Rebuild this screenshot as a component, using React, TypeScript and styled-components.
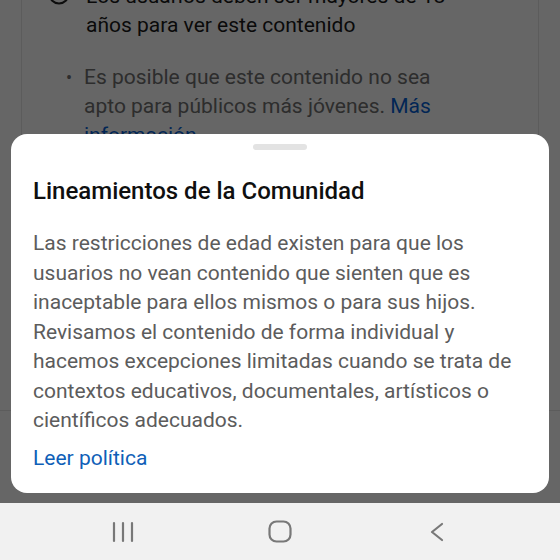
import React from "react";
import styled, { createGlobalStyle } from "styled-components";

const Global = createGlobalStyle`
  html, body { margin: 0; padding: 0; }
  body { font-family: Roboto, "Noto Sans", Arial, sans-serif; background: #fff; }
  #root { width: 560px; height: 560px; overflow: hidden; }
`;

const Phone = styled.div`
  width: 560px;
  height: 560px;
  display: flex;
  flex-direction: column;
  overflow: hidden;
`;

const Screen = styled.div`
  position: relative;
  flex: 1;
  overflow: hidden;
  background: #fff;
`;

const BgCard = styled.div`
  margin: -18px 21px 0;
  height: 428px;
  border-left: 1px solid #e6e6e6;
  border-right: 1px solid #e6e6e6;
  box-sizing: border-box;
  display: flex;
  flex-direction: column;
  gap: 23px;
`;

const BgDivider = styled.div`
  border-top: 1px solid #e6e6e6;
`;

const InfoRow = styled.div`
  display: flex;
  align-items: flex-start;
  padding-left: 26px;
  gap: 16px;
`;

const InfoText = styled.div`
  font-size: 21px;
  line-height: 29px;
  color: #1a1a1a;
`;

const BulletRow = styled.div`
  display: flex;
  align-items: flex-start;
  padding-left: 44px;
`;

const Bullet = styled.span`
  width: 18px;
  flex: none;
  font-size: 18px;
  line-height: 29px;
  color: #707070;
`;

const BulletText = styled.div`
  font-size: 21px;
  line-height: 29px;
  color: #707070;
`;

const BgLink = styled.span`
  color: #065fd4;
`;

const Scrim = styled.div`
  position: absolute;
  inset: 0;
  background: rgba(0, 0, 0, 0.6);
`;

const Sheet = styled.div`
  position: absolute;
  left: 11px;
  right: 11px;
  bottom: 10px;
  background: #fff;
  border-radius: 16px;
  padding: 10px 22px 20px;
  display: flex;
  flex-direction: column;
`;

const Handle = styled.div`
  align-self: center;
  width: 54px;
  height: 6px;
  border-radius: 3px;
  background: #e3e3e3;
  margin-bottom: 27px;
`;

const Title = styled.h2`
  margin: 0 0 24px;
  font-size: 24px;
  line-height: 28px;
  font-weight: 500;
  color: #0f0f0f;
`;

const Body = styled.p`
  margin: 0 0 8px;
  font-size: 21px;
  line-height: 29.5px;
  color: #5c5c5c;
`;

const Link = styled.a`
  font-size: 21px;
  line-height: 29.5px;
  color: #0f5fb8;
  text-decoration: none;
`;

const NavBar = styled.div`
  height: 57px;
  flex: none;
  background: #f1f1f1;
  display: grid;
  grid-template-columns: repeat(3, 1fr);
  padding: 0 44px;
  align-items: center;
  justify-items: center;
`;

const NavIcon = styled.svg`
  display: block;
  color: #787878;
`;

const bodyLines = [
  "Las restricciones de edad existen para que los",
  "usuarios no vean contenido que sienten que es",
  "inaceptable para ellos mismos o para sus hijos.",
  "Revisamos el contenido de forma individual y",
  "hacemos excepciones limitadas cuando se trata de",
  "contextos educativos, documentales, artísticos o",
  "científicos adecuados.",
];

export default function App() {
  return (
    <>
      <Global />
      <Phone>
        <Screen>
          <BgCard>
            <InfoRow>
              <svg width="22" height="22" viewBox="0 0 22 22" style={{ marginTop: 1, flex: "none" }}>
                <circle cx="11" cy="11" r="9.5" fill="none" stroke="#222" strokeWidth="2" />
              </svg>
              <InfoText>
                Los usuarios deben ser mayores de 18
                <br />
                años para ver este contenido
              </InfoText>
            </InfoRow>
            <BulletRow>
              <Bullet>•</Bullet>
              <BulletText>
                Es posible que este contenido no sea
                <br />
                apto para públicos más jóvenes. <BgLink>Más</BgLink>
                <br />
                <BgLink>información</BgLink>
              </BulletText>
            </BulletRow>
          </BgCard>
          <BgDivider />
          <Scrim />
          <Sheet>
            <Handle />
            <Title>Lineamientos de la Comunidad</Title>
            <Body>
              {bodyLines.map((l, i) => (
                <React.Fragment key={i}>
                  {l}
                  {i < bodyLines.length - 1 && <br />}
                </React.Fragment>
              ))}
            </Body>
            <div>
              <Link href="#">Leer política</Link>
            </div>
          </Sheet>
        </Screen>
        <NavBar>
          <NavIcon width="24" height="22" viewBox="0 0 24 22">
            <g stroke="currentColor" strokeWidth="2.2" strokeLinecap="round">
              <line x1="3" y1="2" x2="3" y2="20" />
              <line x1="12" y1="2" x2="12" y2="20" />
              <line x1="21" y1="2" x2="21" y2="20" />
            </g>
          </NavIcon>
          <NavIcon width="24" height="24" viewBox="0 0 24 24">
            <rect x="1.5" y="1.5" width="21" height="20" rx="7" fill="none" stroke="currentColor" strokeWidth="2.2" />
          </NavIcon>
          <NavIcon width="16" height="20" viewBox="0 0 16 20">
            <polyline points="13,2 3,10 13,18" fill="none" stroke="currentColor" strokeWidth="2.2" strokeLinecap="round" strokeLinejoin="round" />
          </NavIcon>
        </NavBar>
      </Phone>
    </>
  );
}
